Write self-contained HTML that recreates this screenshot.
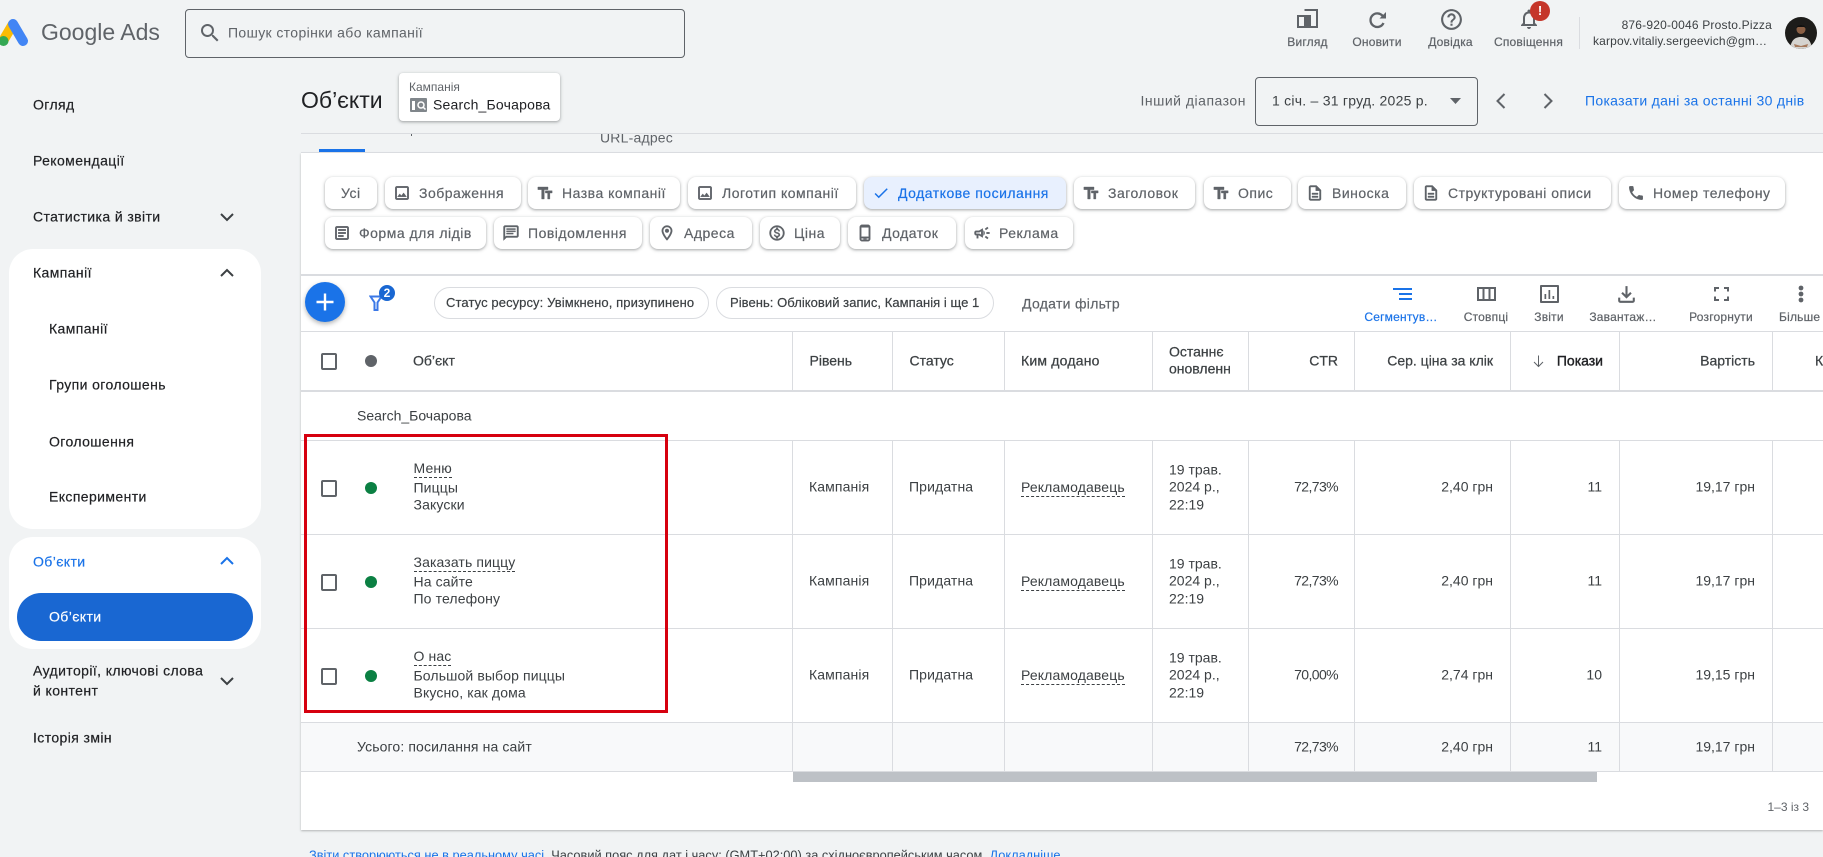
<!DOCTYPE html>
<html lang="uk"><head><meta charset="utf-8"><title>Google Ads</title>
<style>
html,body{margin:0;padding:0;width:1823px;height:857px;overflow:hidden;background:#f1f3f4}
body{position:relative;font-family:"Liberation Sans","Noto Sans CJK JP",sans-serif;font-size:14px;color:#3c4043}
.t{position:absolute;white-space:nowrap;transform:translateY(-50%);line-height:1.2}
.r{transform:translate(-100%,-50%)}
.c{transform:translate(-50%,-50%)}
.b{position:absolute}
.s{font-size:14px;color:#202124;letter-spacing:.4px;-webkit-text-stroke:.2px #202124}
.u{border-bottom:1px dashed #3c4043;padding-bottom:1px;transform:none;line-height:15px}
.chip{position:absolute;height:32px;background:#fff;border-radius:8px;box-shadow:0 1px 2px rgba(60,64,67,.3),0 1px 3px 1px rgba(60,64,67,.15);color:#5f6368;font-size:14px;line-height:32px;letter-spacing:.5px;white-space:nowrap;-webkit-text-stroke:.2px #5f6368;box-sizing:border-box}
.chip svg{position:absolute;top:7px;width:18px;height:18px;fill:#5f6368;stroke:#5f6368;stroke-width:.5}
.ic{position:absolute;fill:#5f6368}
.lab{font-size:12px;color:#5f6368;letter-spacing:.2px;-webkit-text-stroke:.2px #5f6368}
.h{font-size:14px;color:#3c4043;-webkit-text-stroke:.25px #3c4043}
.cb{position:absolute;width:12px;height:13px;border:2px solid #5f6368;border-radius:2px}
.dot{position:absolute;width:12px;height:12px;border-radius:50%;background:#0b8043}
.vl{position:absolute;width:1px;background:#dadce0}
.hl{position:absolute;left:301px;width:1522px;background:#dadce0;height:1px}
.f{font-size:14px;color:#3c4043;letter-spacing:.12px}
.n{letter-spacing:0}
.p{letter-spacing:-.6px}
</style></head><body>
<svg width="0" height="0" style="position:absolute">
<defs>
<symbol id="img" viewBox="0 0 24 24"><path d="M19 5v14H5V5h14m0-2H5c-1.100 0-2 .9-2 2v14c0 1.100.9 2 2 2h14c1.100 0 2-.9 2-2V5c0-1.100-.9-2-2-2zm-4.860 8.860l-3 3.870L9 13.140 6 17h12l-3.860-5.140z"/></symbol>
<symbol id="tt" viewBox="0 0 24 24"><path d="M2.500 4v3.500h5V20h3.500V7.500h5V4h-13.500zm19 5h-9v3h3v8h3v-8h3V9z"/></symbol>
<symbol id="desc" viewBox="0 0 24 24"><path d="M8 16h8v2H8zm0-4h8v2H8zm6-10H6c-1.100 0-2 .9-2 2v16c0 1.100.89 2 1.990 2H18c1.100 0 2-.9 2-2V8l-6-6zm4 18H6V4h7v5h5v11z"/></symbol>
<symbol id="phone" viewBox="0 0 24 24"><path d="M6.620 10.790c1.440 2.830 3.760 5.140 6.590 6.590l2.200-2.200c.27-.27.67-.36 1.020-.24 1.120.37 2.330.57 3.570.57.55 0 1 .45 1 1V20c0 .55-.45 1-1 1-9.390 0-17-7.610-17-17 0-.55.45-1 1-1h3.500c.55 0 1 .45 1 1 0 1.250.2 2.450.57 3.570.11.35.03.74-.25 1.020l-2.200 2.200z"/></symbol>
<symbol id="art" viewBox="0 0 24 24"><path d="M19 3H5c-1.100 0-2 .9-2 2v14c0 1.100.9 2 2 2h14c1.100 0 2-.9 2-2V5c0-1.100-.9-2-2-2zm0 16H5V5h14v14zM14 17H7v-2h7v2zm3-4H7v-2h10v2zm0-4H7V7h10v2z"/></symbol>
<symbol id="msg" viewBox="0 0 24 24"><path d="M20 2H4c-1.100 0-2 .9-2 2v18l4-4h14c1.100 0 2-.9 2-2V4c0-1.100-.9-2-2-2zm0 14H5.170L4 17.170V4h16v12zM6 12h9v1.500H6zM6 9h12v1.500H6zM6 6h12v1.500H6z"/></symbol>
<symbol id="pin" viewBox="0 0 24 24"><path d="M12 2C8.130 2 5 5.130 5 9c0 5.250 7 13 7 13s7-7.750 7-13c0-3.870-3.130-7-7-7zm0 2c2.760 0 5 2.240 5 5 0 2.880-2.880 7.190-5 9.880C9.920 16.210 7 11.850 7 9c0-2.760 2.240-5 5-5z"/><circle cx="12" cy="9" r="2.500"/></symbol>
<symbol id="paid" viewBox="0 0 24 24"><path d="M12 2C6.480 2 2 6.480 2 12s4.480 10 10 10 10-4.480 10-10S17.520 2 12 2zm0 18c-4.410 0-8-3.590-8-8s3.590-8 8-8 8 3.590 8 8-3.590 8-8 8zm.31-8.860c-1.770-.45-2.340-.94-2.340-1.670 0-.84.79-1.430 2.100-1.430 1.380 0 1.900.66 1.940 1.640h1.710c-.05-1.340-.87-2.570-2.490-2.970V5H10.900v1.690c-1.510.32-2.720 1.300-2.720 2.810 0 1.790 1.490 2.690 3.660 3.210 1.950.46 2.340 1.150 2.340 1.870 0 .53-.39 1.390-2.100 1.390-1.600 0-2.230-.72-2.320-1.640H8.040c.1 1.700 1.360 2.660 2.860 2.970V19h2.340v-1.670c1.520-.29 2.720-1.160 2.730-2.770-.01-2.200-1.900-2.960-3.660-3.420z"/></symbol>
<symbol id="mob" viewBox="0 0 24 24"><path d="M16 1H8C6.340 1 5 2.340 5 4v16c0 1.660 1.340 3 3 3h8c1.660 0 3-1.340 3-3V4c0-1.660-1.340-3-3-3zm1 16H7V4.500h10V17zm-1 4H8c-.55 0-1-.45-1-1v-1h10v1c0 .55-.45 1-1 1zm-2-1.500h-4v1h4v-1z"/></symbol>
<symbol id="camp" viewBox="0 0 24 24"><path d="M18 11v2h4v-2h-4zm-2 6.610c.96.71 2.210 1.650 3.200 2.390.4-.53.8-1.070 1.200-1.600-.99-.74-2.240-1.680-3.200-2.400-.4.54-.8 1.080-1.200 1.610zM20.400 5.600c-.4-.53-.8-1.070-1.200-1.600-.99.74-2.240 1.680-3.200 2.400.4.53.8 1.070 1.200 1.600.96-.72 2.210-1.650 3.200-2.400zM4 9c-1.100 0-2 .9-2 2v2c0 1.100.9 2 2 2h1v4h2v-4h1l5 3V6L8 9H4zm5.030 1.710L11 9.530v4.940l-1.970-1.180-.48-.29H4v-2h4.550l.48-.29zM15.500 12c0-1.330-.58-2.530-1.500-3.350v6.690c.92-.81 1.500-2.010 1.500-3.340z"/></symbol>
</defs></svg>

<!-- top bar -->
<svg class="b" style="left:0;top:15px" width="32" height="34" viewBox="0 15 32 34"><path d="M13 24L3 41" stroke="#fbbc04" stroke-width="10" fill="none"/><path d="M13 24L23 41" stroke="#4285f4" stroke-width="10" stroke-linecap="round" fill="none"/><circle cx="3.500" cy="41" r="5" fill="#34a853"/></svg>
<div class="t" style="left:41px;top:33px;font-size:23px;color:#5f6368">Google Ads</div>
<div class="b" style="left:185px;top:9px;width:498px;height:47px;border:1px solid #5f6368;border-radius:4px"></div>
<svg class="ic" style="left:198px;top:21px;fill:#5f6368" width="24" height="24" viewBox="0 0 24 24"><path d="M15.500 14h-.79l-.28-.27A6.471 6.471 0 0 0 16 9.500 6.500 6.500 0 1 0 9.500 16c1.610 0 3.090-.59 4.230-1.570l.27.28v.79l5 4.990L20.490 19l-4.990-5zm-6 0C7.010 14 5 11.990 5 9.500S7.010 5 9.500 5 14 7.010 14 9.500 11.990 14 9.500 14z"/></svg>
<div class="t" style="left:228px;top:33px;color:#5f6368;font-size:14px;letter-spacing:.37px">Пошук сторінки або кампанії</div>

<svg class="b" style="left:1297px;top:9px" width="21" height="19" viewBox="0 0 21 19"><path d="M7.500 1H20V18H1V7h6.500" fill="none" stroke="#5f6368" stroke-width="2"/><rect x="7" y="6" width="7" height="13" fill="#5f6368"/></svg>
<svg class="b" style="left:1368px;top:11px" width="20" height="18" viewBox="0 0 20 18"><path d="M14.800 5.200A6.800 6.800 0 1 0 15.500 12" fill="none" stroke="#5f6368" stroke-width="2.300"/><path d="M11.500 7.500h6.500V1z" fill="#5f6368"/></svg>
<svg class="ic" style="left:1438.500px;top:6.500px" width="25" height="25" viewBox="0 0 24 24"><path d="M11 18h2v-2h-2v2zm1-16C6.480 2 2 6.480 2 12s4.480 10 10 10 10-4.480 10-10S17.520 2 12 2zm0 18c-4.410 0-8-3.590-8-8s3.590-8 8-8 8 3.590 8 8-3.590 8-8 8zm0-14c-2.210 0-4 1.790-4 4h2c0-1.100.9-2 2-2s2 .9 2 2c0 2-3 1.750-3 5h2c0-2.250 3-2.500 3-5 0-2.210-1.790-4-4-4z"/></svg>
<svg class="ic" style="left:1517px;top:7px" width="24" height="24" viewBox="0 0 24 24"><path d="M12 22c1.100 0 2-.9 2-2h-4c0 1.100.9 2 2 2zm6-6v-5c0-3.070-1.630-5.640-4.500-6.320V4c0-.83-.67-1.500-1.500-1.500s-1.500.67-1.500 1.500v.68C7.640 5.360 6 7.920 6 11v5l-2 2v1h16v-1l-2-2zm-2 1H8v-6c0-2.480 1.510-4.500 4-4.500s4 2.020 4 4.500v6z"/></svg>
<div class="b" style="left:1530px;top:1px;width:20px;height:20px;border-radius:50%;background:#c5362a;color:#fff;font-size:13px;font-weight:bold;text-align:center;line-height:20px">!</div>
<div class="t lab c" style="left:1307.500px;top:42px">Вигляд</div>
<div class="t lab c" style="left:1377px;top:42px">Оновити</div>
<div class="t lab c" style="left:1450.500px;top:42px">Довідка</div>
<div class="t lab c" style="left:1528.500px;top:42px">Сповіщення</div>
<div class="b" style="left:1579px;top:17px;width:1px;height:32px;background:#dadce0"></div>
<div class="t r" style="left:1772px;top:24.500px;font-size:12px;color:#3c4043;letter-spacing:.2px">876-920-0046 Prosto.Pizza</div>
<div class="t" style="left:1593px;top:40.500px;font-size:12px;color:#3c4043;letter-spacing:.15px">karpov.vitaliy.sergeevich@gm…</div>
<svg class="b" style="left:1785px;top:17px" width="32" height="32" viewBox="0 0 32 32"><clipPath id="av"><circle cx="16" cy="16" r="16"/></clipPath><g clip-path="url(#av)"><rect width="32" height="32" fill="#1d1c1a"/><path d="M5 32c1-9 5-12 11-12s10 3 11 12z" fill="#d5d3cf"/><circle cx="16" cy="12.500" r="4.500" fill="#8a5f44"/><path d="M11.500 11c0-4 9-4 9 0l-1.500-1h-6z" fill="#111"/><path d="M9 27l7 2 7-2-1 3H10z" fill="#a5795c"/></g></svg>

<!-- sidebar -->
<div class="b" style="left:9px;top:249px;width:252px;height:280px;border-radius:24px;background:#fff"></div>
<div class="b" style="left:9px;top:537px;width:252px;height:112px;border-radius:24px;background:#fff"></div>
<div class="b" style="left:17px;top:593px;width:236px;height:48px;border-radius:24px;background:#1967d2"></div>
<div class="t s" style="left:33px;top:105px">Огляд</div>
<div class="t s" style="left:33px;top:161px">Рекомендації</div>
<div class="t s" style="left:33px;top:217px">Статистика й звіти</div>
<div class="t s" style="left:33px;top:273px">Кампанії</div>
<div class="t s" style="left:49px;top:329px">Кампанії</div>
<div class="t s" style="left:49px;top:385px">Групи оголошень</div>
<div class="t s" style="left:49px;top:441.500px">Оголошення</div>
<div class="t s" style="left:49px;top:497px">Експерименти</div>
<div class="t s" style="left:33px;top:561.500px;color:#1a73e8;-webkit-text-stroke-color:#1a73e8">Об’єкти</div>
<div class="t s" style="left:49px;top:617px;color:#fff;-webkit-text-stroke-color:#fff">Об’єкти</div>
<div class="t s" style="left:33px;top:671px">Аудиторії, ключові слова</div>
<div class="t s" style="left:33px;top:691px">й контент</div>
<div class="t s" style="left:33px;top:737.500px">Історія змін</div>
<svg class="b" style="left:215px;top:205px" width="24" height="24" viewBox="0 0 24 24"><path d="M6 9l6 6 6-6" fill="none" stroke="#3c4043" stroke-width="2"/></svg>
<svg class="b" style="left:215px;top:261px" width="24" height="24" viewBox="0 0 24 24"><path d="M6 15l6-6 6 6" fill="none" stroke="#3c4043" stroke-width="2"/></svg>
<svg class="b" style="left:215px;top:549px" width="24" height="24" viewBox="0 0 24 24"><path d="M6 15l6-6 6 6" fill="none" stroke="#1a73e8" stroke-width="2"/></svg>
<svg class="b" style="left:215px;top:669px" width="24" height="24" viewBox="0 0 24 24"><path d="M6 9l6 6 6-6" fill="none" stroke="#3c4043" stroke-width="2"/></svg>

<!-- header row -->
<div class="t" style="left:301px;top:100.500px;font-size:23px;color:#202124">Об’єкти</div>
<div class="b" style="left:399px;top:73px;width:161px;height:48px;background:#fff;border-radius:4px;box-shadow:0 1px 2px rgba(60,64,67,.3),0 1px 3px 1px rgba(60,64,67,.15)"></div>
<div class="t" style="left:409px;top:87px;font-size:12px;color:#5f6368">Кампанія</div>
<svg class="b" style="left:410px;top:98px" width="17" height="14" viewBox="0 0 17 14"><rect width="17" height="14" rx="1" fill="#80868b"/><rect x="2" y="3" width="3" height="9" fill="#fff"/><circle cx="11" cy="7" r="3" fill="none" stroke="#fff" stroke-width="1.500"/><path d="M13 9l2.500 2.500" stroke="#fff" stroke-width="1.500"/></svg>
<div class="t" style="left:433px;top:105px;font-size:14px;color:#202124;letter-spacing:.2px">Search_Бочарова</div>

<div class="t" style="left:1140.500px;top:101px;color:#5f6368;letter-spacing:.5px">Інший діапазон</div>
<div class="b" style="left:1255px;top:77px;width:221px;height:47px;border:1px solid #5f6368;border-radius:4px"></div>
<div class="t" style="left:1272px;top:101px;color:#3c4043;letter-spacing:.24px">1 січ. – 31 груд. 2025 р.</div>
<svg class="b" style="left:1450px;top:98px" width="11" height="6"><path d="M0 0h11L5.500 6z" fill="#5f6368"/></svg>
<svg class="b" style="left:1489px;top:89px" width="24" height="24" viewBox="0 0 24 24"><path d="M15.500 5l-7 7 7 7" fill="none" stroke="#5f6368" stroke-width="2"/></svg>
<svg class="b" style="left:1536px;top:89px" width="24" height="24" viewBox="0 0 24 24"><path d="M8.500 5l7 7-7 7" fill="none" stroke="#5f6368" stroke-width="2"/></svg>
<div class="t" style="left:1585px;top:101px;color:#1a73e8;letter-spacing:.3px">Показати дані за останні 30 днів</div>

<!-- tab strip remnant -->
<div class="b" style="left:301px;top:134px;width:1522px;height:19px;overflow:hidden">
<div class="t" style="left:299px;top:3.500px;font-size:14px;color:#5f6368;letter-spacing:.2px">URL-адрес</div>
<div class="b" style="left:110px;top:0;width:1px;height:2px;background:#5f6368"></div>
<div class="b" style="left:18px;top:15px;width:46px;height:3px;background:#1a73e8"></div>
</div>
<div class="hl" style="top:133px"></div>

<!-- white panel -->
<div class="b" style="left:301px;top:153px;width:1522px;height:677px;background:#fff;box-shadow:0 1px 2px rgba(60,64,67,.35)"></div>
<div class="hl" style="top:152px"></div>

<!-- chips -->
<div class="chip" style="left:325px;top:177px;width:52px;padding-left:16px">Усі</div>
<div class="chip" style="left:385px;top:177px;width:136px;padding-left:34px"><svg style="left:8px"><use href="#img"/></svg>Зображення</div>
<div class="chip" style="left:528px;top:177px;width:152px;padding-left:34px"><svg style="left:8px"><use href="#tt"/></svg>Назва компанії</div>
<div class="chip" style="left:688px;top:177px;width:168px;padding-left:34px"><svg style="left:8px"><use href="#img"/></svg>Логотип компанії</div>
<div class="chip" style="left:864px;top:177px;width:202px;padding-left:34px;background:#e8f0fe;color:#1a73e8;-webkit-text-stroke-color:#1a73e8"><svg style="left:8px;fill:#1a73e8;stroke:none" viewBox="0 0 24 24"><path d="M9 16.170 4.830 12l-1.420 1.410L9 19 21 7l-1.410-1.410z"/></svg>Додаткове посилання</div>
<div class="chip" style="left:1074px;top:177px;width:121px;padding-left:34px"><svg style="left:8px"><use href="#tt"/></svg>Заголовок</div>
<div class="chip" style="left:1204px;top:177px;width:87px;padding-left:34px"><svg style="left:8px"><use href="#tt"/></svg>Опис</div>
<div class="chip" style="left:1298px;top:177px;width:108px;padding-left:34px"><svg style="left:8px"><use href="#desc"/></svg>Виноска</div>
<div class="chip" style="left:1414px;top:177px;width:197px;padding-left:34px"><svg style="left:8px"><use href="#desc"/></svg>Структуровані описи</div>
<div class="chip" style="left:1619px;top:177px;width:166px;padding-left:34px"><svg style="left:8px"><use href="#phone"/></svg>Номер телефону</div>
<div class="chip" style="left:325px;top:217px;width:161px;padding-left:34px"><svg style="left:8px"><use href="#art"/></svg>Форма для лідів</div>
<div class="chip" style="left:494px;top:217px;width:148px;padding-left:34px"><svg style="left:8px"><use href="#msg"/></svg>Повідомлення</div>
<div class="chip" style="left:650px;top:217px;width:102px;padding-left:34px"><svg style="left:8px"><use href="#pin"/></svg>Адреса</div>
<div class="chip" style="left:760px;top:217px;width:80px;padding-left:34px"><svg style="left:8px"><use href="#paid"/></svg>Ціна</div>
<div class="chip" style="left:848px;top:217px;width:108px;padding-left:34px"><svg style="left:8px"><use href="#mob"/></svg>Додаток</div>
<div class="chip" style="left:965px;top:217px;width:108px;padding-left:34px"><svg style="left:8px"><use href="#camp"/></svg>Реклама</div>

<!-- toolbar -->
<div class="b" style="left:301px;top:274px;width:1522px;height:2px;background:#dadce0"></div>
<div class="b" style="left:305px;top:282px;width:40px;height:40px;border-radius:50%;background:#1a73e8;box-shadow:0 2px 5px rgba(60,64,67,.4)"></div>
<svg class="b" style="left:313px;top:290px" width="24" height="24" viewBox="0 0 24 24"><path d="M12 3.500v17M3.500 12h17" stroke="#fff" stroke-width="2.400"/></svg>
<svg class="b" style="left:369px;top:295px" width="15" height="16" viewBox="0 0 15 16"><path d="M1.500 1.500h11L8.500 7.500V15H5.500V7.500z" fill="none" stroke="#3b78e7" stroke-width="2"/></svg>
<div class="b" style="left:379px;top:285px;width:16px;height:16px;border-radius:50%;background:#1967d2;color:#fff;font-size:12px;font-weight:bold;text-align:center;line-height:16px">2</div>
<div class="b" style="left:434px;top:287px;width:273px;height:30px;border:1px solid #dadce0;border-radius:16px"></div>
<div class="t" style="left:446px;top:303px;font-size:13px;letter-spacing:.1px;color:#3c4043;-webkit-text-stroke:.2px #3c4043">Статус ресурсу: Увімкнено, призупинено</div>
<div class="b" style="left:716px;top:287px;width:276px;height:30px;border:1px solid #dadce0;border-radius:16px"></div>
<div class="t" style="left:730px;top:303px;font-size:13px;letter-spacing:.05px;color:#3c4043;-webkit-text-stroke:.2px #3c4043">Рівень: Обліковий запис, Кампанія і ще 1</div>
<div class="t" style="left:1022px;top:303.500px;font-size:14px;letter-spacing:.3px;color:#5f6368;-webkit-text-stroke:.2px #5f6368">Додати фільтр</div>

<svg class="b" style="left:1393px;top:288px" width="19" height="13" viewBox="0 0 19 13"><path d="M0 0h19v2H0zM6 5h13v2H6zM6 10h13v2H6z" fill="#1a73e8"/></svg>
<svg class="ic" style="left:1477px;top:287px" width="19" height="14" viewBox="0 0 19 14"><path d="M0 0h19v14H0zM2 2v10h3.500V2zM7.500 2v10h4V2zM13.500 2v10H17V2z" fill-rule="evenodd"/></svg>
<svg class="ic" style="left:1540px;top:285px" width="19" height="18" viewBox="0 0 19 18"><path d="M1 0h17c.6 0 1 .4 1 1v16c0 .6-.4 1-1 1H1c-.6 0-1-.4-1-1V1c0-.6.4-1 1-1zm1 2v14h15V2zm2.500 7h1.700v5H4.500zm4-4h1.700v9H8.500zm4 6h1.700v3h-1.700z" fill-rule="evenodd"/></svg>
<svg class="ic" style="left:1614px;top:281.500px" width="25" height="25" viewBox="0 0 24 24"><path d="M18 15v3H6v-3H4v3c0 1.100.9 2 2 2h12c1.100 0 2-.9 2-2v-3h-2zm-1-4-1.410-1.410L13 12.170V4h-2v8.170L8.410 9.590 7 11l5 5 5-5z"/></svg>
<svg class="ic" style="left:1714px;top:287px" width="15" height="14" viewBox="0 0 15 14"><path d="M0 0h5v2H2v2.500H0zM10 0h5v4.500h-2V2h-3zM0 9.500h2V12h3v2H0zM13 9.500h2V14h-5v-2h3z"/></svg>
<svg class="ic" style="left:1788.500px;top:282px" width="24" height="24" viewBox="0 0 24 24"><circle cx="12" cy="6" r="2.400"/><circle cx="12" cy="12" r="2.400"/><circle cx="12" cy="18" r="2.400"/></svg>
<div class="t lab c" style="left:1401px;top:317px;color:#1a73e8;-webkit-text-stroke-color:#1a73e8">Сегментув…</div>
<div class="t lab c" style="left:1486px;top:317px">Стовпці</div>
<div class="t lab c" style="left:1549px;top:317px">Звіти</div>
<div class="t lab c" style="left:1623px;top:317px">Завантаж…</div>
<div class="t lab c" style="left:1721px;top:317px">Розгорнути</div>
<div class="t lab" style="left:1779px;top:317px">Більше</div>

<!-- table lines -->
<div class="hl" style="top:331px"></div>
<div class="b" style="left:301px;top:390px;width:1522px;height:2px;background:#dadce0"></div>
<div class="hl" style="top:440px"></div>
<div class="hl" style="top:534px"></div>
<div class="hl" style="top:628px"></div>
<div class="b" style="left:301px;top:722px;width:1522px;height:50px;background:#f8f9fa;border-top:1px solid #dadce0;border-bottom:1px solid #dadce0;box-sizing:border-box"></div>
<div class="vl" style="left:792px;top:332px;height:58px"></div><div class="vl" style="left:792px;top:441px;height:330px"></div>
<div class="vl" style="left:892px;top:332px;height:58px"></div><div class="vl" style="left:892px;top:441px;height:330px"></div>
<div class="vl" style="left:1004px;top:332px;height:58px"></div><div class="vl" style="left:1004px;top:441px;height:330px"></div>
<div class="vl" style="left:1152px;top:332px;height:58px"></div><div class="vl" style="left:1152px;top:441px;height:330px"></div>
<div class="vl" style="left:1248px;top:332px;height:58px"></div><div class="vl" style="left:1248px;top:441px;height:330px"></div>
<div class="vl" style="left:1354px;top:332px;height:58px"></div><div class="vl" style="left:1354px;top:441px;height:330px"></div>
<div class="vl" style="left:1510px;top:332px;height:58px"></div><div class="vl" style="left:1510px;top:441px;height:330px"></div>
<div class="vl" style="left:1619px;top:332px;height:58px"></div><div class="vl" style="left:1619px;top:441px;height:330px"></div>
<div class="vl" style="left:1772px;top:332px;height:58px"></div><div class="vl" style="left:1772px;top:441px;height:330px"></div>

<!-- table header -->
<div class="cb" style="left:321px;top:353px"></div>
<div class="dot" style="left:365px;top:355px;background:#5f6368"></div>
<div class="t h" style="left:413px;top:361px">Об’єкт</div>
<div class="t h" style="left:809.500px;top:361px">Рівень</div>
<div class="t h" style="left:909.500px;top:361px">Статус</div>
<div class="t h" style="left:1021px;top:361px;letter-spacing:.2px">Ким додано</div>
<div class="t h" style="left:1169px;top:352px">Останнє</div>
<div class="t h" style="left:1169px;top:369px">оновленн</div>
<div class="t h r" style="left:1338px;top:361px">CTR</div>
<div class="t h r" style="left:1493px;top:361px">Сер. ціна за клік</div>
<svg class="b" style="left:1532px;top:354px" width="13" height="14" viewBox="0 0 13 14"><path d="M6.500 1.500v11M2 8l4.500 4.500L11 8" fill="none" stroke="#5f6368" stroke-width="1"/></svg>
<div class="t h r" style="left:1603px;top:361px;color:#202124;-webkit-text-stroke:.4px #202124">Покази</div>
<div class="t h r" style="left:1755px;top:361px">Вартість</div>
<div class="t h" style="left:1815px;top:361px">К</div>

<div class="t f n" style="left:357px;top:416px">Search_Бочарова</div>

<!-- row 1 -->
<div class="cb" style="left:321px;top:480px"></div><div class="dot" style="left:365px;top:482px"></div>
<div class="t f u" style="left:413.500px;top:461px">Меню</div>
<div class="t f" style="left:413.500px;top:488px">Пиццы</div>
<div class="t f" style="left:413.500px;top:505px">Закуски</div>
<div class="t f" style="left:809px;top:487px">Кампанія</div>
<div class="t f" style="left:909px;top:487px">Придатна</div>
<div class="t f u" style="left:1021px;top:479.500px">Рекламодавець</div>
<div class="t f n" style="left:1169px;top:470px">19 трав.</div><div class="t f n" style="left:1169px;top:487px">2024 р.,</div><div class="t f n" style="left:1169px;top:504.500px">22:19</div>
<div class="t f r p" style="left:1338px;top:487px">72,73%</div><div class="t f n r" style="left:1493px;top:487px">2,40 грн</div><div class="t f n r" style="left:1602px;top:487px">11</div><div class="t f n r" style="left:1755px;top:487px">19,17 грн</div>

<!-- row 2 -->
<div class="cb" style="left:321px;top:574px"></div><div class="dot" style="left:365px;top:576px"></div>
<div class="t f u" style="left:413.500px;top:555px">Заказать пиццу</div>
<div class="t f" style="left:413.500px;top:582px">На сайте</div>
<div class="t f" style="left:413.500px;top:599px">По телефону</div>
<div class="t f" style="left:809px;top:581px">Кампанія</div>
<div class="t f" style="left:909px;top:581px">Придатна</div>
<div class="t f u" style="left:1021px;top:573.500px">Рекламодавець</div>
<div class="t f n" style="left:1169px;top:564px">19 трав.</div><div class="t f n" style="left:1169px;top:581px">2024 р.,</div><div class="t f n" style="left:1169px;top:598.500px">22:19</div>
<div class="t f r p" style="left:1338px;top:581px">72,73%</div><div class="t f n r" style="left:1493px;top:581px">2,40 грн</div><div class="t f n r" style="left:1602px;top:581px">11</div><div class="t f n r" style="left:1755px;top:581px">19,17 грн</div>

<!-- row 3 -->
<div class="cb" style="left:321px;top:668px"></div><div class="dot" style="left:365px;top:670px"></div>
<div class="t f u" style="left:413.500px;top:649px">О нас</div>
<div class="t f" style="left:413.500px;top:676px">Большой выбор пиццы</div>
<div class="t f" style="left:413.500px;top:693px">Вкусно, как дома</div>
<div class="t f" style="left:809px;top:675px">Кампанія</div>
<div class="t f" style="left:909px;top:675px">Придатна</div>
<div class="t f u" style="left:1021px;top:667.500px">Рекламодавець</div>
<div class="t f n" style="left:1169px;top:658px">19 трав.</div><div class="t f n" style="left:1169px;top:675px">2024 р.,</div><div class="t f n" style="left:1169px;top:692.500px">22:19</div>
<div class="t f r p" style="left:1338px;top:675px">70,00%</div><div class="t f n r" style="left:1493px;top:675px">2,74 грн</div><div class="t f n r" style="left:1602px;top:675px">10</div><div class="t f n r" style="left:1755px;top:675px">19,15 грн</div>

<!-- totals -->
<div class="t f" style="left:357px;top:747px">Усього: посилання на сайт</div>
<div class="t f r p" style="left:1338px;top:747px">72,73%</div><div class="t f n r" style="left:1493px;top:747px">2,40 грн</div><div class="t f n r" style="left:1602px;top:747px">11</div><div class="t f n r" style="left:1755px;top:747px">19,17 грн</div>
<div class="b" style="left:793px;top:772px;width:804px;height:10px;background:#bdc1c6"></div>
<div class="t r" style="left:1809px;top:806.500px;font-size:12px;color:#5f6368">1–3 із 3</div>

<!-- red annotation -->
<div class="b" style="left:304px;top:434px;width:358px;height:273px;border:3px solid #d6000f;box-sizing:content-box"></div>

<!-- footer note -->
<div class="t" style="left:309px;top:855px;font-size:12.800px;color:#3c4043"><span style="color:#1a73e8">Звіти створюються не в реальному часі.</span> Часовий пояс для дат і часу: (GMT+02:00) за східноєвропейським часом. <span style="color:#1a73e8">Докладніше</span></div>
</body></html>
